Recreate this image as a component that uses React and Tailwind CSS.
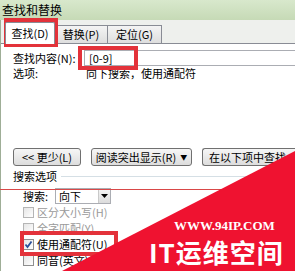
import React from 'react';

const cjk = "font-['Noto_Sans_CJK_SC','Noto_Sans',sans-serif]";

function Checkbox({ checked = false, disabled = false, label }) {
  return (
    <div className="flex items-center h-[16px]">
      <span
        className={`w-[11px] h-[11px] border flex items-center justify-center bg-gradient-to-br from-[#e6e6e6] to-white ${
          disabled ? 'border-[#b5b5b5]' : 'border-[#8f8f8f]'
        }`}
      >
        {checked && (
          <svg width="9" height="9" viewBox="0 0 9 9">
            <path d="M1.5 4.5 L3.5 7 L7.5 1.5" fill="none" stroke="#2a4f9a" strokeWidth="1.8" />
          </svg>
        )}
      </span>
      <span className={`ml-[3px] ${disabled ? 'text-[#9a9a9a]' : 'text-black'}`}>{label}</span>
    </div>
  );
}

function Button({ children, className = '' }) {
  return (
    <div
      className={`h-[18px] flex items-center justify-center border border-[#707070] rounded-[3px] bg-gradient-to-b from-[#f6f6f6] to-[#dddddd] whitespace-nowrap ${className}`}
    >
      {children}
    </div>
  );
}

export default function App() {
  return (
    <div className={`relative w-[295px] h-[271px] overflow-hidden bg-white text-[11px] leading-none text-black ${cjk}`}>
      {/* title bar */}
      <div className="h-[20px] flex items-center pl-[2px] text-[12px] bg-gradient-to-b from-[#d8e8cc] to-[#c6dab6]">
        查找和替换
      </div>

      <div className="flex h-[251px]">
        {/* window frame */}
        <div className="w-[3px] bg-[#c9dabd] border-r border-[#9fae97]" />

        <div className="flex-1 flex flex-col">
          {/* tab strip */}
          <div className="h-[23px] flex items-end pl-[4px] bg-[#eef0ed]">
            <div className="relative z-10 -mb-px h-[22px] w-[50px] flex items-center justify-center bg-white border border-b-0 border-[#898c95] rounded-t-[2px]">
              查找(D)
            </div>
            <div className="h-[18px] w-[53px] flex items-center justify-center border border-l-0 border-b-0 border-[#898c95] bg-gradient-to-b from-[#f4f4f4] to-[#dedede]">
              替换(P)
            </div>
            <div className="h-[18px] w-[54px] flex items-center justify-center border border-l-0 border-b-0 border-[#898c95] bg-gradient-to-b from-[#f4f4f4] to-[#dedede]">
              定位(G)
            </div>
          </div>

          {/* tab page */}
          <div className="flex-1 flex flex-col border-t border-[#898c95] bg-white pl-[12px]">
            <div className="mt-[6px] h-[16px] flex items-center">
              <span className="w-[71px]">查找内容(N):</span>
              <div className="flex-1 h-[16px] flex items-center pl-[4px] border border-r-0 border-[#abadb3] bg-white">
                [0-9]
              </div>
            </div>
            <div className="h-[15px] flex items-center">
              <span className="w-[73px]">选项:</span>
              <span>向下搜索，使用通配符</span>
            </div>

            <div className="mt-[67px] h-[18px] flex gap-[10px]">
              <Button className="w-[68px]">&lt;&lt; 更少(L)</Button>
              <Button className="w-[101px]">
                阅读突出显示(R)
                <span className="ml-[4px] text-[7px]">▼</span>
              </Button>
              <Button className="w-[100px] justify-start pl-[6px] border-r-0 rounded-r-none">在以下项中查找</Button>
            </div>

            <div className="mt-[4px] h-[12px] flex items-center">
              <span>搜索选项</span>
              <div className="flex-1 ml-[4px] h-px bg-[#d5dfe5]" />
            </div>

            <div className="mt-[6px] pl-[10px] h-[16px] flex items-center">
              <span className="w-[32px]">搜索:</span>
              <div className="w-[56px] h-[16px] flex items-center border border-[#abadb3] bg-white">
                <span className="flex-1 pl-[3px]">向下</span>
                <span className="w-[12px] h-full flex items-center justify-center border-l border-[#c9c9c9] bg-gradient-to-b from-[#f4f4f4] to-[#dcdcdc]">
                  <svg width="7" height="4" viewBox="0 0 7 4">
                    <path d="M0 0 H7 L3.5 4 Z" fill="#000" />
                  </svg>
                </span>
              </div>
            </div>

            <div className="pl-[10px] flex flex-col">
              <Checkbox disabled label="区分大小写(H)" />
              <Checkbox disabled label="全字匹配(Y)" />
              <Checkbox checked label="使用通配符(U)" />
              <Checkbox label="同音(英文)(K)" />
            </div>
          </div>
        </div>
      </div>

      {/* annotation overlays */}
      <div className="absolute left-0 right-0 top-[189px] h-px bg-[#d94848]" />
      <div className="absolute left-[4px] top-[18px] w-[54px] h-[29px] border-[4px] border-[#e3323a]" />
      <div className="absolute left-[78px] top-[46px] w-[60px] h-[24px] border-[4px] border-[#e3323a]" />
      <div className="absolute left-[20px] top-[231px] w-[98px] h-[25px] border-[4px] border-[#e3323a]" />

      {/* watermark */}
      <svg className="absolute left-0 top-0" width="295" height="271" viewBox="0 0 295 271">
        <polygon points="62,271 295,151 295,271" fill="#ef1230" />
      </svg>
      <div className="absolute left-[174px] top-[220px] text-[13px] leading-[12px] font-bold text-white font-['Liberation_Serif',serif]">
        WWW.94IP.COM
      </div>
      <div className={`absolute left-[149px] top-[239px] text-[26px] leading-[26px] font-bold text-white tracking-[1px] ${cjk}`}>
        IT运维空间
      </div>
    </div>
  );
}
